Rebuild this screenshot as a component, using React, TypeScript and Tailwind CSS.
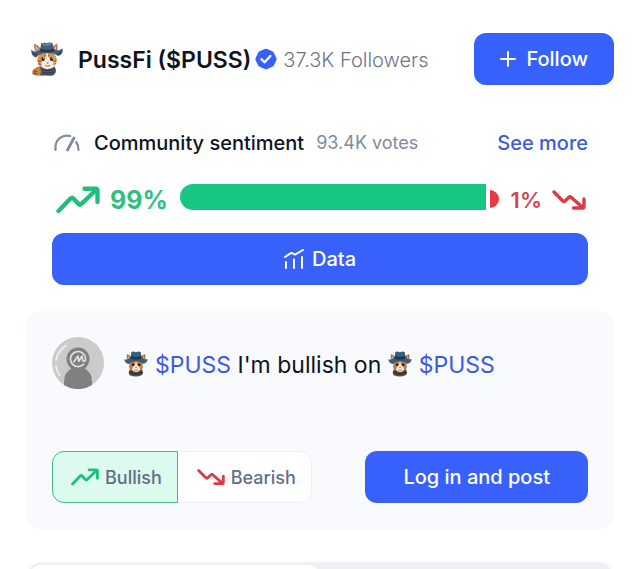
import { useState } from "react";
import { clsx } from "clsx";

type IconProps = { className?: string };

function CatWithHat({ className }: IconProps) {
  return (
    <svg viewBox="14 8 104 104" className={className} aria-hidden="true">
      <path d="M40 84 Q24 88 21 99 Q20 110 34 111 L62 110 L56 84Z" fill="#c9813f" />
      <path d="M24 98 Q30 94 36 99 M22 105 Q29 101 36 106" stroke="#704020" strokeWidth="3" fill="none" />
      <path d="M42 84 Q60 76 88 82 Q96 92 92 102 Q88 111 78 111 L44 110 Q52 96 42 84Z" fill="#465361" />
      <path d="M50 91 Q66 98 84 90 M54 102 Q68 106 86 100" stroke="#2d3742" strokeWidth="3" fill="none" />
      <path d="M27 13 Q24 27 33 38 L47 29 Q38 16 27 13Z" fill="#b56f45" />
      <path d="M30 18 Q29 27 35 33 L40 29Z" fill="#f0b6a1" />
      <path d="M97 12 Q101 25 95 38 L82 29 Q87 17 97 12Z" fill="#b56f45" />
      <path d="M94 18 Q96 26 92 33 L87 29Z" fill="#f0b6a1" />
      <ellipse cx="66" cy="64" rx="30" ry="27" fill="#dc9448" />
      <path d="M66 40 L60 60 Q54 67 46 70 Q46 88 66 91 Q90 90 92 72 Q80 68 75 59Z" fill="#f6eadc" />
      <path d="M38 66 L50 69 M39 75 L50 76 M94 65 L84 69 M93 74 L84 76 M59 46 L60 53 M72 46 L71 53" stroke="#945429" strokeWidth="3" />
      <ellipse cx="54" cy="60" rx="5" ry="6" fill="#2a211d" />
      <ellipse cx="80" cy="60" rx="5" ry="6" fill="#2a211d" />
      <circle cx="56" cy="57" r="2" fill="#fff" />
      <circle cx="82" cy="57" r="2" fill="#fff" />
      <path d="M64 71 Q68 69 72 71 L68 76Z" fill="#c96c62" />
      <path d="M61 80 Q68 84 75 80" stroke="#9b604a" strokeWidth="3" fill="none" />
      <path d="M18 32 Q28 43 45 31 L48 12 Q60 8 66 12 Q76 7 84 13 L88 30 Q104 38 113 27 Q118 43 101 51 Q84 40 65 42 Q46 42 32 56 Q16 49 18 32Z" fill="#465f7b" />
      <path d="M46 28 Q66 36 87 28 L89 36 Q66 44 44 37Z" fill="#273b50" />
      <path d="M52 15 Q64 20 78 14" stroke="#7290ad" strokeWidth="4" fill="none" />
      <path d="M22 42 Q27 49 34 46 M97 45 Q106 44 110 38" stroke="#293c51" strokeWidth="4" fill="none" />
    </svg>
  );
}

function CatBust({ className }: IconProps) {
  return (
    <svg viewBox="0 0 72 78" className={className} aria-hidden="true">
      <path d="M18 55 L54 55 Q60 68 53 73 Q36 80 17 73 Q11 65 18 55Z" fill="#62503f" />
      <path d="M17 63 Q36 75 55 63" stroke="#393331" strokeWidth="6" fill="none" />
      <path d="M9 9 Q5 22 16 30 L24 22 Q18 12 9 9Z" fill="#a96d4b" />
      <path d="M63 9 Q68 22 58 30 L49 22 Q54 12 63 9Z" fill="#a96d4b" />
      <path d="M11 14 L13 23 L19 21Z M61 14 L60 23 L54 21Z" fill="#efb49d" />
      <ellipse cx="36" cy="42" rx="21" ry="20" fill="#d18b48" />
      <path d="M36 25 L33 43 Q24 48 24 55 Q28 63 36 63 Q45 63 49 54 Q47 47 39 43Z" fill="#f3e3d0" />
      <path d="M16 46 L23 48 M17 52 L24 52 M56 46 L49 48 M55 52 L48 52" stroke="#84502e" strokeWidth="2" />
      <ellipse cx="27" cy="41" rx="4" ry="4" fill="#241d1b" />
      <ellipse cx="46" cy="41" rx="4" ry="4" fill="#241d1b" />
      <path d="M33 48 L40 48 L36 52Z" fill="#b9665c" />
      <path d="M31 57 Q36 60 42 57" stroke="#9b604a" strokeWidth="2" fill="none" />
      <path d="M1 25 Q10 28 20 19 L22 3 Q29 0 36 4 Q45 -1 50 4 L53 18 Q62 28 71 23 Q70 37 57 38 Q36 25 15 39 Q2 37 1 25Z" fill="#385f7c" />
      <path d="M21 15 Q36 22 52 15 L53 22 Q36 29 19 22Z" fill="#203448" />
    </svg>
  );
}

function VerifiedBadge({ className }: IconProps) {
  return (
    <svg viewBox="0 0 24 24" className={className} role="img" aria-label="Verified">
      <path
        d="M10.6 1.2 Q12 .2 13.4 1.2 L18.4 3.2 Q20.2 3.6 20.7 5.4 L23.2 10.5 Q24 12 23.2 13.5 L20.8 18.6 Q20.3 20.4 18.4 20.8 L13.4 22.9 Q12 23.8 10.6 22.9 L5.6 20.8 Q3.7 20.4 3.2 18.6 L.8 13.5 Q0 12 .8 10.5 L3.3 5.4 Q3.8 3.6 5.6 3.2Z"
        fill="#3861fb"
      />
      <path d="M7 12.2 L10.5 15.6 L16.8 8.8" fill="none" stroke="#fff" strokeWidth="2.5" strokeLinecap="round" strokeLinejoin="round" />
    </svg>
  );
}

function GaugeIcon({ className }: IconProps) {
  return (
    <svg viewBox="0 0 26 18" className={className} fill="none" stroke="#808a9d" strokeLinecap="round" aria-hidden="true">
      <path d="M1.5 16 V13 A11.5 11.5 0 0 1 16 2" strokeWidth="2.2" />
      <path d="M22.2 8 Q24.5 11 24.5 16" strokeWidth="2.2" />
      <path d="M13.5 16 L20 4" strokeWidth="2.8" />
    </svg>
  );
}

function TrendUp({ className }: IconProps) {
  return (
    <svg viewBox="0 0 44 28" className={className} fill="none" stroke="#20bf7c" strokeWidth="4.4" strokeLinecap="round" strokeLinejoin="round" aria-hidden="true">
      <path d="M2.5 25 L14.5 12.5 Q16 11 17.5 12.5 L22.5 18 Q24 19.3 25.5 17.8 L41 3 M28.5 2.8 H39.5 Q41.5 2.8 41.5 4.8 V16" />
    </svg>
  );
}

function TrendDown({ className }: IconProps) {
  return (
    <svg viewBox="0 0 34 20" className={className} fill="none" stroke="#db3b47" strokeWidth="3.4" strokeLinecap="round" strokeLinejoin="round" aria-hidden="true">
      <path d="M2 2 L11 11.2 Q12 12 13 11 L17 7.2 Q18 6.3 19 7.2 L31.5 18 M32 9 V16.2 Q32 18 30.2 18 H21.5" />
    </svg>
  );
}

function ChartIcon({ className }: IconProps) {
  return (
    <svg viewBox="0 0 20 20" className={className} fill="none" stroke="currentColor" strokeWidth="2" strokeLinecap="round" strokeLinejoin="round" aria-hidden="true">
      <path d="M1 8 L6.8 4.2 Q7.5 3.7 8.2 4.1 L11 5.6 L19 1" />
      <path d="M2 13 V19 M10 10.5 V19 M18 8 V19" />
    </svg>
  );
}

function PlusIcon({ className }: IconProps) {
  return (
    <svg viewBox="0 0 16 16" className={className} stroke="currentColor" strokeWidth="2" strokeLinecap="round" aria-hidden="true">
      <path d="M8 1 V15 M1 8 H15" />
    </svg>
  );
}

function GuestAvatar({ className }: IconProps) {
  return (
    <svg viewBox="0 0 52 52" className={className} role="img" aria-label="Guest">
      <circle cx="26" cy="26" r="26" fill="#cbcbcb" />
      <path d="M14 8.5 A23 23 0 0 0 4 23 M4 29 Q4.5 34 7.5 38" fill="none" stroke="#eee" strokeWidth="1.8" strokeLinecap="round" />
      <path d="M12 48 V45 Q12 35 20 31 H32 Q40 35 40 45 V48 A26 26 0 0 1 12 48Z" fill="#808080" />
      <circle cx="26" cy="22" r="11.5" fill="#808080" />
      <path
        d="M31.5 27.2 A7.5 7.5 0 1 1 33.5 21.5 Q33.8 24.3 32.2 24.3 Q30.6 24.3 30.6 22 L30 19 L26.8 24.3 L26 19 L22 24.8"
        fill="none"
        stroke="#e3e3e3"
        strokeWidth="1.6"
        strokeLinecap="round"
        strokeLinejoin="round"
      />
    </svg>
  );
}

function CoinLink() {
  return (
    <>
      <CatBust className="mr-[7px] mb-1.5 inline-block h-[26px] w-6" />
      <a href="#puss" className="text-[#3e5bd8]">$PUSS</a>
    </>
  );
}

const moods = [
  { id: "bullish", label: "Bullish", Icon: TrendUp },
  { id: "bearish", label: "Bearish", Icon: TrendDown },
];

const tabs = ["Top", "Latest"];

function Header() {
  return (
    <header className="flex items-center">
      <CatWithHat className="mr-3.5 ml-1 size-[34px] shrink-0" />
      <h1 className="pt-0.5 text-[23px] font-semibold text-[#0d1421]">PussFi ($PUSS)</h1>
      <VerifiedBadge className="mr-1.5 ml-1 size-[22px] shrink-0" />
      <span className="pt-0.5 text-[20px] font-light text-[#6d778b]">37.3K Followers</span>
      <button className="ml-auto flex h-13 items-center gap-2.5 rounded-xl bg-[#3861fb] px-[26px] text-[20px] font-medium text-white">
        <PlusIcon className="size-4" />
        Follow
      </button>
    </header>
  );
}

function Sentiment() {
  return (
    <section className="px-[26px] pt-11">
      <div className="flex items-center leading-7">
        <GaugeIcon className="mr-3.5 ml-0.5 h-[18px] w-[26px]" />
        <h2 className="text-[20px] font-medium text-[#0d1421]">Community sentiment</h2>
        <span className="ml-3 text-[18px] text-[#808a9d]">93.4K votes</span>
        <a href="#sentiment" className="ml-auto text-[20px] font-medium text-[#3e5bd8]">See more</a>
      </div>
      <div className="mt-[25px] flex h-9 items-center">
        <TrendUp className="mr-2.5 ml-1 h-7 w-11 shrink-0" />
        <span className="pt-0.5 text-[25px] font-bold text-[#2fbf85]">99%</span>
        <div className="mr-3 mb-1.5 ml-3 flex h-[26px] flex-1 items-stretch gap-1">
          <div className="flex-1 rounded-l-full bg-[#16c784]" />
          <div className="mt-1.5 mb-0.5 w-[9px] rounded-r-full bg-[#ea3943]" />
        </div>
        <span className="text-[22px] font-semibold text-[#d5434f]">1%</span>
        <TrendDown className="mr-0.5 ml-2.5 h-5 w-[34px] shrink-0" />
      </div>
      <button className="mt-[15px] flex h-13 w-full items-center justify-center gap-2 rounded-xl bg-[#3861fb] text-[20px] font-medium text-white">
        <ChartIcon className="size-5" />
        Data
      </button>
    </section>
  );
}

function Composer() {
  const [mood, setMood] = useState("bullish");

  return (
    <section className="mt-[26px] rounded-2xl bg-[#f8fafd] p-[26px] pb-[27px]">
      <div className="flex min-h-[114px] items-start">
        <GuestAvatar className="mr-5 size-13 shrink-0" />
        <div
          role="textbox"
          aria-label="Post"
          contentEditable
          suppressContentEditableWarning
          className="flex-1 pt-2.5 text-[23px] leading-9 text-[#0d1421] outline-none"
        >
          <CoinLink /> I'm bullish on <CoinLink />
        </div>
      </div>
      <div className="flex items-center justify-between">
        <div className="flex h-13 text-[18px] font-medium text-[#616e85]">
          {moods.map(({ id, label, Icon }) => (
            <button
              key={id}
              aria-pressed={mood === id}
              onClick={() => setMood(id)}
              className={clsx(
                "flex items-center gap-1.5 border first:rounded-l-xl last:rounded-r-xl last:border-l-0",
                id === "bullish" ? "pr-[15px] pl-[18px]" : "pr-[15px] pl-[19px]",
                mood === id ? "border-[#3fba8a] bg-[#dcfaee]" : "border-[#eff2f5] bg-white",
              )}
            >
              <Icon className="h-[18px] w-7" />
              {label}
            </button>
          ))}
        </div>
        <button className="h-13 rounded-xl bg-[#3861fb] px-[38px] text-[20px] font-medium text-white">
          Log in and post
        </button>
      </div>
    </section>
  );
}

export default function App() {
  return (
    <main className="h-screen overflow-hidden bg-white px-[26px] pt-[33px] font-['Inter','Liberation_Sans',sans-serif]">
      <Header />
      <Sentiment />
      <Composer />
      <div role="tablist" className="mt-8 flex h-13 rounded-2xl bg-[#eff0f3] p-[3px]">
        {tabs.map((tab, i) => (
          <button
            key={tab}
            role="tab"
            aria-label={tab}
            aria-selected={i === 0}
            className={clsx("flex-1 rounded-xl", i === 0 && "bg-white")}
          />
        ))}
      </div>
    </main>
  );
}
